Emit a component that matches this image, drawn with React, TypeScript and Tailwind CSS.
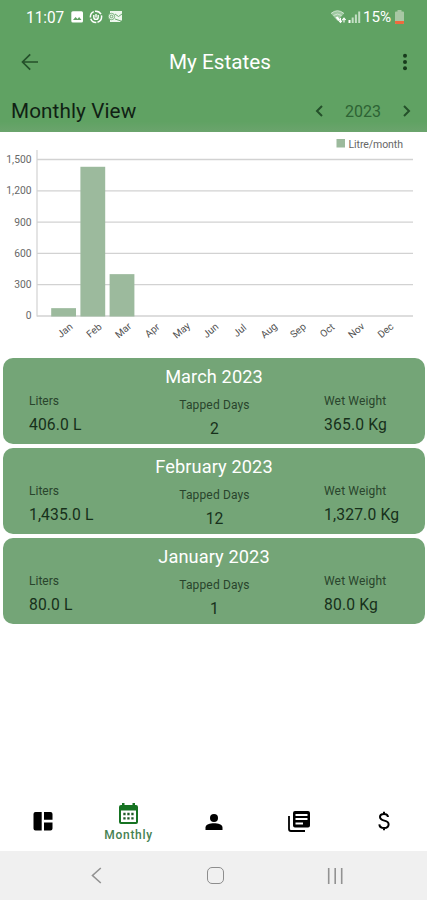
import React from "react";

const months = ["Jan", "Feb", "Mar", "Apr", "May", "Jun", "Jul", "Aug", "Sep", "Oct", "Nov", "Dec"];
const litres = [80, 1435, 406];
const ticks = ["1,500", "1,200", "900", "600", "300", "0"];

const cards = [
  { month: "March 2023", liters: "406.0 L", days: "2", weight: "365.0 Kg" },
  { month: "February 2023", liters: "1,435.0 L", days: "12", weight: "1,327.0 Kg" },
  { month: "January 2023", liters: "80.0 L", days: "1", weight: "80.0 Kg" },
];

function StatusBar() {
  return (
    <div className="flex h-[34px] items-center justify-between pl-[26px] pr-[23px] text-white">
      <div className="flex items-center">
        <span className="w-[45px] pt-[2px] text-[16px] leading-none">
          <span className="inline-block origin-left scale-x-[0.96]">11:07</span>
        </span>
        <svg width="52" height="14" viewBox="0 0 52 14" fill="none">
          <rect x="0.3" y="1.2" width="11.7" height="11.3" rx="1.5" fill="#fff" />
          <path d="M2 10l2.5-3 2 2 1.6-2L10.5 10z" fill="#60a263" />
          <circle cx="25" cy="6.8" r="5.6" stroke="#fff" strokeWidth="1.5" strokeDasharray="7 1.2" />
          <path d="M22.8 5v2.2a2.2 2.2 0 0 0 4.400 0V5M25 4v3.500" stroke="#fff" strokeWidth="1.4" />
          <path d="M39 1h12v9l-2 2H39V9a3.500 3.500 0 0 1 0-5z" fill="#edf7ed" />
          <circle cx="40.5" cy="6.5" r="3.2" fill="#edf7ed" stroke="#60a263" strokeWidth="0.8" />
          <circle cx="40.5" cy="6.5" r="1.3" stroke="#60a263" strokeWidth="0.9" />
          <path d="M44 4l3.500 2.500L51 4M44 9l6 2" stroke="#60a263" strokeWidth="0.9" />
        </svg>
      </div>
      <div className="flex items-center">
        <svg width="33" height="16" viewBox="0 0 33 16" fill="none">
          <path d="M1 4.500Q7.500-1 14 4.500L7.500 12z" fill="#9fc9a1" />
          <path d="M1 4.500Q7.500-1 14 4.500M3.500 6.500Q7.500 3.500 11.500 6.500" stroke="#d1e5d2" strokeWidth="1" />
          <path d="M5.500 8.500l2-1 3 3.500-2 1z" fill="#fff" />
          <path d="M10.500 9v4M8.800 11.500l1.700 2 1.700-2M14 13.500v-4M12.300 11l1.700-2 1.700 2" stroke="#fff" strokeWidth="1.1" />
          <path d="M19.500 11v3" stroke="#fff" strokeWidth="2" />
          <path d="M22.700 8.500V14M25.900 5.500V14M29.200 2.500V14" stroke="#c3dec4" strokeWidth="2" />
        </svg>
        <span className="ml-[0px] w-[32px] whitespace-nowrap pt-px text-[15.5px] leading-none">
          <span className="inline-block origin-left scale-x-[0.98]">15%</span>
        </span>
        <svg width="9" height="14" viewBox="0 0 9 14">
          <path d="M2.500 0h4v1.500H8a1 1 0 0 1 1 1V13a1 1 0 0 1-1 1H1a1 1 0 0 1-1-1V2.500a1 1 0 0 1 1-1h1.500z" fill="#a8c7a4" />
          <path d="M0 11h9v2a1 1 0 0 1-1 1H1a1 1 0 0 1-1-1z" fill="#ee6a3d" />
        </svg>
      </div>
    </div>
  );
}

function Header() {
  return (
    <header className="h-[132px] bg-[#60a263]">
      <StatusBar />
      <div className="flex h-[56px] items-center justify-between pl-[21px] pr-[19px]">
        <svg width="18" height="18" viewBox="0 0 18 18" fill="none" stroke="#24502a" strokeWidth="1.7">
          <path d="M17 9H1.800M9.200 1.300L1.500 9l7.700 7.700" />
        </svg>
        <h1 className="pt-px pr-[1px] text-[20.7px] text-white">My Estates</h1>
        <svg width="6" height="18" viewBox="0 0 6 18" fill="#173b1c">
          <circle cx="3" cy="2.7" r="2" />
          <circle cx="3" cy="9" r="2" />
          <circle cx="3" cy="15.3" r="2" />
        </svg>
      </div>
      <div className="flex h-[42px] items-center justify-between bg-linear-to-b from-[#60a263] from-75% to-[#6ba46d] pl-[11px] pr-[16px]">
        <h2 className="pt-[2px] text-[20.7px] tracking-[0.1px] text-[#102114]">Monthly View</h2>
        <div className="flex items-center text-[#24502a]">
          <svg width="8" height="12" viewBox="0 0 8 12" fill="none" stroke="currentColor" strokeWidth="2">
            <path d="M7 1L2 6l5 5" />
          </svg>
          <span className="ml-[22px] mr-[22px] pt-[2px] text-[16px] text-[#2d6334]">2023</span>
          <svg width="8" height="12" viewBox="0 0 8 12" fill="none" stroke="currentColor" strokeWidth="2">
            <path d="M1 1l5 5-5 5" />
          </svg>
        </div>
      </div>
    </header>
  );
}

function Chart() {
  return (
    <svg width="427" height="226" viewBox="0 132 427 226" className="block" fontFamily='Roboto, "Liberation Sans", sans-serif'>
      <rect x="336.5" y="139" width="8.5" height="8.5" fill="#9cba9d" />
      <text x="348.5" y="147.500" fontSize="10.5" textLength="54.5" fill="#666">Litre/month</text>
      {ticks.map((tick, i) => {
        const y = 159.5 + i * 31.3;
        return (
          <g key={tick}>
            <path d={`M37 ${y}H413`} stroke="#d2d2d2" strokeWidth="1.3" />
            <text x="31.5" y={y + 3.4} fontSize="10.3" textAnchor="end" fill="#686868">{tick}</text>
          </g>
        );
      })}
      <path d="M37 150V316.500" stroke="#d2d2d2" strokeWidth="1.2" />
      {litres.map((value, i) => {
        const height = (value / 1500) * 156.5;
        return <rect key={i} x={51.2 + i * 29.2} y={316.5 - height} width="24.8" height={height} fill="#9cba9d" />;
      })}
      {months.map((month, i) => (
        <text
          key={month}
          x={64.5 + i * 29.15}
          y="334"
          fontSize="10"
          textAnchor="middle"
          fill="#505050"
          transform={`rotate(-40 ${64.5 + i * 29.15} 330)`}
        >
          {month}
        </text>
      ))}
    </svg>
  );
}

function MonthCard({ month, liters, days, weight }: (typeof cards)[number]) {
  return (
    <section className="h-[86px] rounded-[10px] bg-[#74a577] text-[#17301b]">
      <h3 className="pt-[6px] text-center text-[18.2px] leading-[26px] tracking-[0.1px] text-white">{month}</h3>
      <div className="grid grid-cols-[126px_169px_1fr] pl-[26px]">
        <div className="pt-[3px]">
          <p className="text-[12px] leading-[16px] text-[#29442c]">Liters</p>
          <p className="mt-[5px] text-[15.7px] leading-[22px] tracking-[0.1px]">{liters}</p>
        </div>
        <div className="pr-[50px] pt-[7px] text-center">
          <p className="whitespace-nowrap text-[12px] leading-[16px] tracking-[0.15px] text-[#29442c]">Tapped Days</p>
          <p className="mt-[5px] text-[15.7px] leading-[22px]">{days}</p>
        </div>
        <div className="pt-[3px]">
          <p className="text-[12px] leading-[16px] tracking-[0.15px] text-[#29442c]">Wet Weight</p>
          <p className="mt-[5px] text-[15.7px] leading-[22px] tracking-[0.15px]">{weight}</p>
        </div>
      </div>
    </section>
  );
}

function BottomTabs() {
  return (
    <nav className="grid h-[56px] grid-cols-5 items-center justify-items-center bg-white">
      <svg width="20" height="19" viewBox="0 0 20 19">
        <path d="M8.700 0v18.500H2.500a2 2 0 0 1-2-2V2a2 2 0 0 1 2-2zM11 0h6.500a2 2 0 0 1 2 2v5.700H11zM11 10.500h8.500v6a2 2 0 0 1-2 2H11z" />
      </svg>
      <div className="flex flex-col items-center pt-[3px]">
        <svg width="19" height="21" viewBox="0 0 19 21">
          <path fillRule="evenodd" fill="#167322" d="M3 0h2.500v2h8V0H16v2h1a2 2 0 0 1 2 2v15a2 2 0 0 1-2 2H2a2 2 0 0 1-2-2V4a2 2 0 0 1 2-2h1zM2 7.500V19h15V7.500z" />
          <path d="M4.300 11h10.500M4.300 15.300h10.500" stroke="#225b29" strokeWidth="2.3" strokeDasharray="2.3 1.7" />
        </svg>
        <span className="pl-[1px] pt-[5px] text-[12px] font-medium leading-[13px] tracking-[0.7px] text-[#458151]">Monthly</span>
      </div>
      <svg width="18" height="16" viewBox="0 0 18 16" className="ml-px mt-px">
        <circle cx="9" cy="4" r="4" />
        <path d="M0.500 16v-2.500C0.500 10.500 5 9.300 9 9.300s8.500 1.200 8.500 4.200V16z" />
      </svg>
      <svg width="22" height="21" viewBox="0 0 22 21">
        <path d="M1 5v13a2 2 0 0 0 2 2h14" fill="none" stroke="#000" strokeWidth="1.8" />
        <path fillRule="evenodd" d="M7 0h13a2 2 0 0 1 2 2v12.500a2 2 0 0 1-2 2H7a2 2 0 0 1-2-2V2a2 2 0 0 1 2-2zm.5 3v2h12V3zm0 4v2h12V7zm0 4.500v2H15v-2z" />
      </svg>
      <svg width="12" height="20" viewBox="0 0 12 20" fill="none" stroke="#000" strokeWidth="2">
        <path d="M10 6C9.800 3.900 8.300 3 6 3 3.600 3 2 4.100 2 6c0 5 8.600 2.300 8.600 7.200C10.600 15.500 8.800 17 6.200 17 3.600 17 1.600 15.800 1.300 13.300M6 .8V3M6 17v2.200" />
      </svg>
    </nav>
  );
}

function SystemNavigation() {
  return (
    <div className="flex h-[49px] items-center justify-between bg-[#f0f0f0] pl-[91px] pr-[83px] text-[#929292]">
      <svg width="11" height="17" viewBox="0 0 11 17" fill="none" stroke="currentColor" strokeWidth="1.6">
        <path d="M9.800 1L1.500 8.500 9.800 16" />
      </svg>
      <div className="ml-[2px] h-[17px] w-[17px] rounded-[5px] border-[1.5px] border-[#8d8d8d]" />
      <svg width="17" height="16" viewBox="0 0 17 16" stroke="currentColor" strokeWidth="1.6">
        <path d="M1.700 0v16M8.200 0v16M14.700 0v16" />
      </svg>
    </div>
  );
}

export default function App() {
  return (
    <div className="flex h-[900px] w-[427px] flex-col overflow-hidden bg-white font-[Roboto,'Liberation_Sans',sans-serif]">
      <Header />
      <Chart />
      <main className="flex flex-1 flex-col gap-[4px] pl-[3px] pr-[2px]">
        {cards.map((card) => (
          <MonthCard key={card.month} {...card} />
        ))}
      </main>
      <div className="pb-[2px]">
        <BottomTabs />
      </div>
      <SystemNavigation />
    </div>
  );
}
